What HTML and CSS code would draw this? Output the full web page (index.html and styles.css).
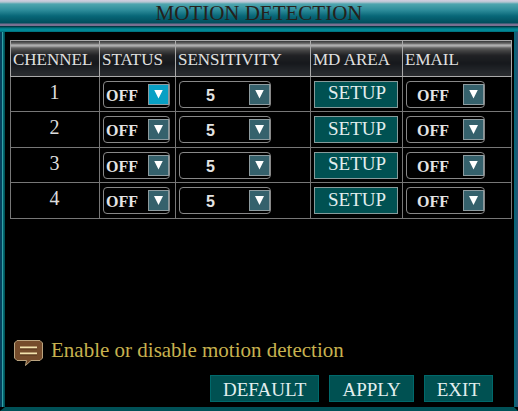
FILE: index.html
```html
<!DOCTYPE html>
<html lang="en">
<head>
    <meta charset="UTF-8">
    <meta name="viewport" content="width=device-width, initial-scale=1.0">
    <title>Motion Detection</title>
    <link rel="stylesheet" href="styles.css">
</head>
<body>
    <header class="titlebar">
        <h1>MOTION DETECTION</h1>
    </header>

    <form class="panel">
        <table class="channels">
            <colgroup>
                <col class="col-channel">
                <col class="col-status">
                <col class="col-sensitivity">
                <col class="col-area">
                <col class="col-email">
            </colgroup>
            <thead>
                <tr>
                    <th scope="col">CHENNEL</th>
                    <th scope="col">STATUS</th>
                    <th scope="col">SENSITIVITY</th>
                    <th scope="col">MD AREA</th>
                    <th scope="col">EMAIL</th>
                </tr>
            </thead>
            <tbody>
                <tr>
                    <td class="number">1</td>
                    <td><div class="select status active"><select aria-label="Status 1"><option>OFF</option><option>ON</option></select></div></td>
                    <td><div class="select sensitivity"><select aria-label="Sensitivity 1"><option>5</option><option>6</option></select></div></td>
                    <td><button type="button" class="setup">SETUP</button></td>
                    <td><div class="select email"><select aria-label="Email 1"><option>OFF</option><option>ON</option></select></div></td>
                </tr>
                <tr>
                    <td class="number">2</td>
                    <td><div class="select status"><select aria-label="Status 2"><option>OFF</option><option>ON</option></select></div></td>
                    <td><div class="select sensitivity"><select aria-label="Sensitivity 2"><option>5</option><option>6</option></select></div></td>
                    <td><button type="button" class="setup">SETUP</button></td>
                    <td><div class="select email"><select aria-label="Email 2"><option>OFF</option><option>ON</option></select></div></td>
                </tr>
                <tr>
                    <td class="number">3</td>
                    <td><div class="select status"><select aria-label="Status 3"><option>OFF</option><option>ON</option></select></div></td>
                    <td><div class="select sensitivity"><select aria-label="Sensitivity 3"><option>5</option><option>6</option></select></div></td>
                    <td><button type="button" class="setup">SETUP</button></td>
                    <td><div class="select email"><select aria-label="Email 3"><option>OFF</option><option>ON</option></select></div></td>
                </tr>
                <tr>
                    <td class="number">4</td>
                    <td><div class="select status"><select aria-label="Status 4"><option>OFF</option><option>ON</option></select></div></td>
                    <td><div class="select sensitivity"><select aria-label="Sensitivity 4"><option>5</option><option>6</option></select></div></td>
                    <td><button type="button" class="setup">SETUP</button></td>
                    <td><div class="select email"><select aria-label="Email 4"><option>OFF</option><option>ON</option></select></div></td>
                </tr>
            </tbody>
        </table>

        <p class="hint">
            <svg width="30" height="28" viewBox="0 0 30 28" aria-hidden="true">
                <path d="M3 1.5H26L28.5 4V19L26 21.5H17L11.5 26.5L12.5 21.5H3L.5 19V4Z" fill="#754c2c" stroke="#b9a37f"/>
                <path d="M6 8.5H23M6 14.5H23" stroke="#f3e3ae" stroke-width="2"/>
                <path d="M6 10H23M6 16H23" stroke="#54351c"/>
            </svg>
            Enable or disable motion detection
        </p>

        <div class="actions">
            <button type="button">DEFAULT</button>
            <button type="button">APPLY</button>
            <button type="button">EXIT</button>
        </div>
    </form>
</body>
</html>
```
FILE: styles.css
```css
*,
*::before,
*::after {
    box-sizing: border-box;
}
body {
    margin: 0;
    min-height: 100vh;
    display: flex;
    flex-direction: column;
    background-color: #000;
    color: #ddd;
    font-family: "Liberation Serif", serif;
}
.titlebar {
    height: 27px;
    background: linear-gradient(#d5cfe0 0, #b8c6d2 2px, #4fa5ae 4px, #2e8d9b 10px, #086778 16px, #004d5c 23px, #796f91 24px, #796f91 26px, #003b46 26px);
}
h1 {
    margin: 0;
    font-size: 21px;
    font-weight: normal;
    line-height: 26px;
    text-align: center;
    color: #25211b;
}
.panel {
    flex: 1;
    display: flex;
    flex-direction: column;
    padding: 8px 2px 5px 5px;
    border: 5px solid transparent;
    border-width: 5px 4px 4px 5px;
    border-bottom-color: #005157;
    background:
        linear-gradient(#000, #000) padding-box,
        linear-gradient(#00505c 0, #008795 2px, #008795 4px, #00606c 5px, transparent 5px) border-box,
        linear-gradient(to right, #06405c 0, #06405c 2px, #35a0a8 2px, #35a0a8 3px, #007078 3px, #00474f 5px, #00474f calc(100% - 4px), #006a78 calc(100% - 4px), #2c5275 100%) border-box;
}
.channels {
    width: 100%;
    table-layout: fixed;
    border-collapse: collapse;
}
.col-channel {
    width: 89px;
}
.col-status {
    width: 76px;
}
.col-sensitivity {
    width: 135px;
}
.col-area {
    width: 92px;
}
.channels th,
.channels td {
    border: 1px solid #777;
}
.channels th {
    height: 36px;
    padding: 3px 0 0 2px;
    border-color: #aaa;
    background: linear-gradient(#555 0, #555 2px, #b2b2b2 3px, #aaa 5px, #666 6px, #444 9px, #202124 14px, #16181c 22px, #24272b 30px, #2b2d30 100%);
    color: #e0e0e0;
    font-size: 17px;
    font-weight: normal;
    text-align: left;
    white-space: nowrap;
}
.channels td {
    height: 36px;
    padding: 0 4px 0 3px;
}
.channels tbody tr:nth-child(odd) td {
    height: 35px;
}
.channels .number {
    padding-bottom: 4px;
    font-size: 20px;
    text-align: center;
}
.select {
    position: relative;
    height: 27px;
}
.status {
    width: 67px;
}
.sensitivity {
    width: 92px;
}
.email {
    width: 79px;
}
.select select {
    appearance: none;
    display: block;
    width: 100%;
    height: 100%;
    padding: 2px 0 0 2px;
    border: 1px solid #888;
    border-radius: 4px;
    background-color: #000;
    color: #e4e4e4;
    font: bold 16px "Liberation Serif", serif;
}
.sensitivity select {
    padding-left: 26px;
    font: bold 16px "Liberation Sans", sans-serif;
}
.email select {
    padding-left: 10px;
}
/* drop-down arrow */
.select::before,
.select::after {
    content: "";
    position: absolute;
    pointer-events: none;
}
.select::before {
    top: 3px;
    right: 1px;
    width: 21px;
    height: 21px;
    border: 1px solid #8d9b9f;
    background-color: #35616c;
}
.select::after {
    top: 9px;
    right: 7px;
    width: 9px;
    height: 9px;
    background-color: #fff;
    clip-path: polygon(0 0, 100% 0, 50% 100%);
}
.active::before {
    background-color: #08a0c4;
}
button {
    height: 27px;
    padding: 2px 12px 0;
    border: 1px solid #00696b;
    background-color: #005152;
    color: #e2eeee;
    font: 19px/22px "Liberation Serif", serif;
}
.setup {
    display: block;
    width: 100%;
    padding: 0 0 2px 2px;
    border-color: #879b9b;
}
.hint {
    display: flex;
    align-items: flex-start;
    gap: 7px;
    margin: auto 0 8px 4px;
    color: #c7b24f;
    font-size: 21px;
    line-height: 22px;
}
.actions {
    display: flex;
    justify-content: flex-end;
    gap: 10px;
    padding-right: 19px;
}
```
